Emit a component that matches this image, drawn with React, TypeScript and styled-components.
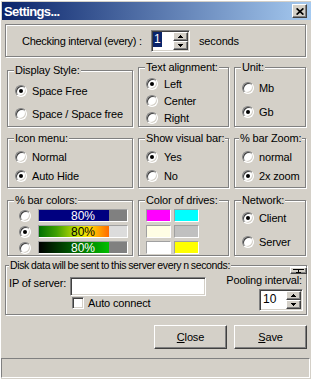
import React from 'react';
import styled, { createGlobalStyle, css } from 'styled-components';

const face = '#d4d0c8';

const GlobalStyle = createGlobalStyle`
  html, body { margin: 0; padding: 0; background: #ffffff; }
  body { font-family: "Liberation Sans", Arial, sans-serif; }
`;

// win2k bevels
const sunken = css`
  border: 1px solid;
  border-color: #808080 #ffffff #ffffff #808080;
  box-shadow: inset 1px 1px 0 #404040, inset -1px -1px 0 ${face};
`;

const raised = css`
  border: 1px solid;
  border-color: #ffffff #404040 #404040 #ffffff;
  box-shadow: inset -1px -1px 0 #808080;
`;

const etched = css`
  border: 1px solid #808080;
  box-shadow: inset 1px 1px 0 #ffffff, 1px 1px 0 #ffffff;
`;

const Window = styled.div`
  width: 311px;
  height: 379px;
  box-sizing: border-box;
  background: ${face};
  border-top: 1px solid #ffffff;
  border-left: 1px solid #ffffff;
  display: flex;
  flex-direction: column;
  font-size: 11px;
  letter-spacing: -0.15px;
  color: #000;
  overflow: hidden;
`;

const TitleBar = styled.div`
  margin: 1px 0 0 1px;
  height: 18px;
  flex: none;
  background: linear-gradient(to right, #0a246a, #a6caf0);
  display: flex;
  align-items: center;
  justify-content: space-between;
  padding: 0 4px 0 2px;
`;

const Title = styled.span`
  color: #ffffff;
  font-weight: bold;
  font-size: 13px;
  letter-spacing: -0.6px;
`;

const CloseBtn = styled.div`
  width: 15px;
  height: 14px;
  box-sizing: border-box;
  background: ${face};
  ${raised};
  display: flex;
  align-items: center;
  justify-content: center;
`;

const TopPanel = styled.div`
  margin: 4px 0 0 4px;
  width: 301px;
  height: 33px;
  flex: none;
  box-sizing: border-box;
  ${etched};
  display: flex;
  align-items: center;
  padding-left: 16px;
`;

const TopLabel = styled.span`
  width: 129px;
  white-space: nowrap;
  letter-spacing: -0.3px;
`;

const Seconds = styled.span`
  margin-left: 9px;
`;

const Spin = styled.div<{ $w: number }>`
  display: flex;
  width: ${p => p.$w}px;
  height: 22px;
  box-sizing: border-box;
  padding: 1px;
  background: #ffffff;
  ${sunken};
`;

const SpinValue = styled.div<{ $pl: number }>`
  flex: 1;
  display: flex;
  align-items: center;
  padding-left: ${p => p.$pl}px;
  padding-bottom: 2px;
  font-size: 12px;
  letter-spacing: 0;
`;

const Selected = styled.span`
  background: #0a246a;
  color: #ffffff;
  padding: 0 1px;
  line-height: 15px;
`;

const SpinButtons = styled.div`
  display: flex;
  flex-direction: column;
  width: 15px;
`;

const SpinBtn = styled.div`
  flex: 1;
  box-sizing: border-box;
  background: ${face};
  ${raised};
  display: flex;
  align-items: center;
  justify-content: center;
`;

const Row = styled.div<{ $top: number; $h: number }>`
  display: grid;
  grid-template-columns: 126px 91px 72px;
  column-gap: 5px;
  align-items: end;
  margin: ${p => p.$top}px 0 0 6px;
  height: ${p => p.$h}px;
  flex: none;
`;

const Group = styled.div<{ $h?: number }>`
  position: relative;
  box-sizing: border-box;
  height: ${p => (p.$h ? `${p.$h}px` : '100%')};
  ${etched};
`;

const Caption = styled.span<{ $left?: number; $tight?: boolean }>`
  position: absolute;
  top: -7px;
  left: ${p => p.$left ?? 6}px;
  padding: 0 1px;
  line-height: 13px;
  background: ${face};
  white-space: nowrap;
  ${p => p.$tight && css`
    font-size: 10.5px;
    letter-spacing: -0.35px;
    word-spacing: -0.5px;
  `}
`;

const Options = styled.div<{ $pt: number; $gap: number; $pl?: number }>`
  display: flex;
  flex-direction: column;
  padding: ${p => p.$pt}px 0 0 ${p => p.$pl ?? 7}px;
  gap: ${p => p.$gap}px;
`;

const Option = styled.div<{ $gap?: number }>`
  display: flex;
  align-items: center;
  height: 13px;
  gap: ${p => p.$gap ?? 5}px;
  white-space: nowrap;
`;

const Radio = styled.span<{ $on?: boolean }>`
  position: relative;
  flex: none;
  width: 12px;
  height: 12px;
  box-sizing: border-box;
  border-radius: 50%;
  background: #ffffff;
  border: 1px solid;
  border-color: #808080 #ffffff #ffffff #808080;
  box-shadow: inset 1px 1px 0 #404040, inset -1px -1px 0 ${face};
  &::after {
    content: '';
    display: ${p => (p.$on ? 'block' : 'none')};
    position: absolute;
    left: 3px;
    top: 3px;
    width: 4px;
    height: 4px;
    border-radius: 50%;
    background: #000;
  }
`;

const Bar = styled.div<{ $rest: string }>`
  position: relative;
  display: flex;
  width: 90px;
  height: 13px;
  box-sizing: border-box;
  border: 1px solid;
  border-color: #a0a0a0 #ffffff #ffffff #a0a0a0;
  background: ${p => p.$rest};
`;

const Fill = styled.div<{ $pct: number; $fill: string }>`
  width: ${p => p.$pct}%;
  background: ${p => p.$fill};
`;

const BarText = styled.span<{ $color: string }>`
  position: absolute;
  inset: 0;
  display: flex;
  align-items: center;
  justify-content: center;
  color: ${p => p.$color};
  font-size: 12px;
  letter-spacing: 0;
`;

const Swatches = styled.div`
  display: grid;
  grid-template-columns: 25px 25px;
  grid-auto-rows: 13px;
  gap: 3px;
  padding: 8px 0 0 7px;
`;

const Swatch = styled.div<{ $c: string }>`
  box-sizing: border-box;
  border: 1px solid;
  border-color: #a0a0a0 #ffffff #ffffff #a0a0a0;
  background: ${p => p.$c};
`;

const DiskGroup = styled(Group)`
  margin: 9px 0 0 4px;
  width: 302px;
  height: 50px;
  flex: none;
  display: flex;
  justify-content: space-between;
  padding: 0 3px 0 3px;
`;

const TinyBtn = styled.div`
  position: absolute;
  top: 1px;
  right: -1px;
  width: 17px;
  height: 7px;
  box-sizing: border-box;
  background: ${face};
  ${raised};
  display: flex;
  align-items: center;
  justify-content: center;
`;

const ServerCol = styled.div`
  display: flex;
  flex-direction: column;
  padding-top: 11px;
`;

const IpRow = styled.div`
  display: grid;
  grid-template-columns: 61px 136px;
  align-items: start;
  line-height: 13px;
  white-space: nowrap;
`;

const TextField = styled.div`
  height: 19px;
  box-sizing: border-box;
  background: #ffffff;
  ${sunken};
`;

const CheckRow = styled.div`
  display: flex;
  align-items: center;
  gap: 4px;
  margin: 1px 0 0 63px;
  height: 12px;
`;

const CheckBox = styled.span`
  width: 12px;
  height: 12px;
  box-sizing: border-box;
  background: #ffffff;
  ${sunken};
`;

const PoolCol = styled.div`
  display: flex;
  flex-direction: column;
  align-items: flex-end;
  padding-top: 8px;
  gap: 2px;
`;

const PoolLabel = styled.span`
  line-height: 13px;
  margin-right: 1px;
  white-space: nowrap;
`;

const Buttons = styled.div`
  display: flex;
  justify-content: flex-end;
  gap: 7px;
  margin: 10px 4px 0 0;
  flex: none;
`;

const PushButton = styled.button`
  width: 73px;
  height: 24px;
  box-sizing: border-box;
  padding: 0;
  background: ${face};
  ${raised};
  font: inherit;
  letter-spacing: inherit;
  color: #000;
`;

const StatusBar = styled.div`
  margin: 9px 1px 0 0;
  height: 20px;
  flex: none;
  box-sizing: border-box;
  border: 1px solid;
  border-color: #808080 #ffffff #ffffff #808080;
`;

const Arrow = ({ down }: { down?: boolean }) => (
  <svg width="5" height="3" viewBox="0 0 5 3" shapeRendering="crispEdges">
    <path d={down ? 'M0 0H5L2.5 3Z' : 'M2.5 0L5 3H0Z'} fill="#000" />
  </svg>
);

const SpinBox = ({ w, value, selected, pl }: { w: number; value: string; selected?: boolean; pl: number }) => (
  <Spin $w={w}>
    <SpinValue $pl={pl}>{selected ? <Selected>{value}</Selected> : value}</SpinValue>
    <SpinButtons>
      <SpinBtn><Arrow /></SpinBtn>
      <SpinBtn><Arrow down /></SpinBtn>
    </SpinButtons>
  </Spin>
);

const RadioOpt = ({ label, on, gap }: { label: string; on?: boolean; gap?: number }) => (
  <Option $gap={gap}>
    <Radio $on={on} />
    <span>{label}</span>
  </Option>
);

const bars = [
  { fill: '#000080', rest: '#808080', color: '#ffffff' },
  { fill: 'linear-gradient(to right, #007000, #3fa000 25%, #c8e000 55%, #ffe000 70%, #ff9000 90%, #ff6a00)', rest: '#dcdcdc', color: '#000000', on: true },
  { fill: 'linear-gradient(to right, #000000, #00c000)', rest: '#808080', color: '#ffffff' },
];

const driveColors = ['#ff00ff', '#00ffff', '#fffde4', '#c0c0c0', '#ffffff', '#ffff00'];

const App: React.FC = () => (
  <>
    <GlobalStyle />
    <Window>
      <TitleBar>
        <Title>Settings...</Title>
        <CloseBtn>
          <svg width="8" height="7" viewBox="0 0 8 7">
            <path d="M0.6 0.4L7.4 6.6M7.4 0.4L0.6 6.6" stroke="#000" strokeWidth="1.7" />
          </svg>
        </CloseBtn>
      </TitleBar>

      <TopPanel>
        <TopLabel>Checking interval (every) :</TopLabel>
        <SpinBox w={39} value="1" selected pl={0} />
        <Seconds>seconds</Seconds>
      </TopPanel>

      <Row $top={10} $h={60}>
        <Group $h={57}>
          <Caption>Display Style:</Caption>
          <Options $pt={13} $gap={10}>
            <RadioOpt label="Space Free" on />
            <RadioOpt label="Space / Space free" />
          </Options>
        </Group>
        <Group>
          <Caption>Text alignment:</Caption>
          <Options $pt={9} $gap={4}>
            <RadioOpt label="Left" on gap={6} />
            <RadioOpt label="Center" gap={6} />
            <RadioOpt label="Right" gap={6} />
          </Options>
        </Group>
        <Group>
          <Caption>Unit:</Caption>
          <Options $pt={13} $gap={11}>
            <RadioOpt label="Mb" />
            <RadioOpt label="Gb" on />
          </Options>
        </Group>
      </Row>

      <Row $top={11} $h={50}>
        <Group>
          <Caption>Icon menu:</Caption>
          <Options $pt={11} $gap={6}>
            <RadioOpt label="Normal" />
            <RadioOpt label="Auto Hide" on />
          </Options>
        </Group>
        <Group>
          <Caption>Show visual bar:</Caption>
          <Options $pt={11} $gap={6}>
            <RadioOpt label="Yes" on gap={6} />
            <RadioOpt label="No" gap={6} />
          </Options>
        </Group>
        <Group>
          <Caption $left={4}>% bar Zoom:</Caption>
          <Options $pt={11} $gap={6}>
            <RadioOpt label="normal" />
            <RadioOpt label="2x zoom" on />
          </Options>
        </Group>
      </Row>

      <Row $top={12} $h={56}>
        <Group>
          <Caption>% bar colors:</Caption>
          <Options $pt={8} $gap={3} $pl={11}>
            {bars.map((b, i) => (
              <Option key={i} $gap={7}>
                <Radio $on={b.on} />
                <Bar $rest={b.rest}>
                  <Fill $pct={80} $fill={b.fill} />
                  <BarText $color={b.color}>80%</BarText>
                </Bar>
              </Option>
            ))}
          </Options>
        </Group>
        <Group>
          <Caption>Color of drives:</Caption>
          <Swatches>
            {driveColors.map(c => <Swatch key={c} $c={c} />)}
          </Swatches>
        </Group>
        <Group>
          <Caption>Network:</Caption>
          <Options $pt={10} $gap={11}>
            <RadioOpt label="Client" on />
            <RadioOpt label="Server" />
          </Options>
        </Group>
      </Row>

      <DiskGroup>
        <Caption $left={3} $tight>Disk data will be sent to this server every n seconds:</Caption>
        <TinyBtn>
          <svg width="11" height="4" viewBox="0 0 11 4" shapeRendering="crispEdges">
            <path d="M0 0H11V1H6V3H8V4H3V3H5V1H0Z" fill="#000" />
          </svg>
        </TinyBtn>
        <ServerCol>
          <IpRow>
            <span>IP of server:</span>
            <TextField />
          </IpRow>
          <CheckRow>
            <CheckBox />
            <span>Auto connect</span>
          </CheckRow>
        </ServerCol>
        <PoolCol>
          <PoolLabel>Pooling interval:</PoolLabel>
          <SpinBox w={44} value="10" pl={2} />
        </PoolCol>
      </DiskGroup>

      <Buttons>
        <PushButton><u>C</u>lose</PushButton>
        <PushButton><u>S</u>ave</PushButton>
      </Buttons>

      <StatusBar />
    </Window>
  </>
);

export default App;
